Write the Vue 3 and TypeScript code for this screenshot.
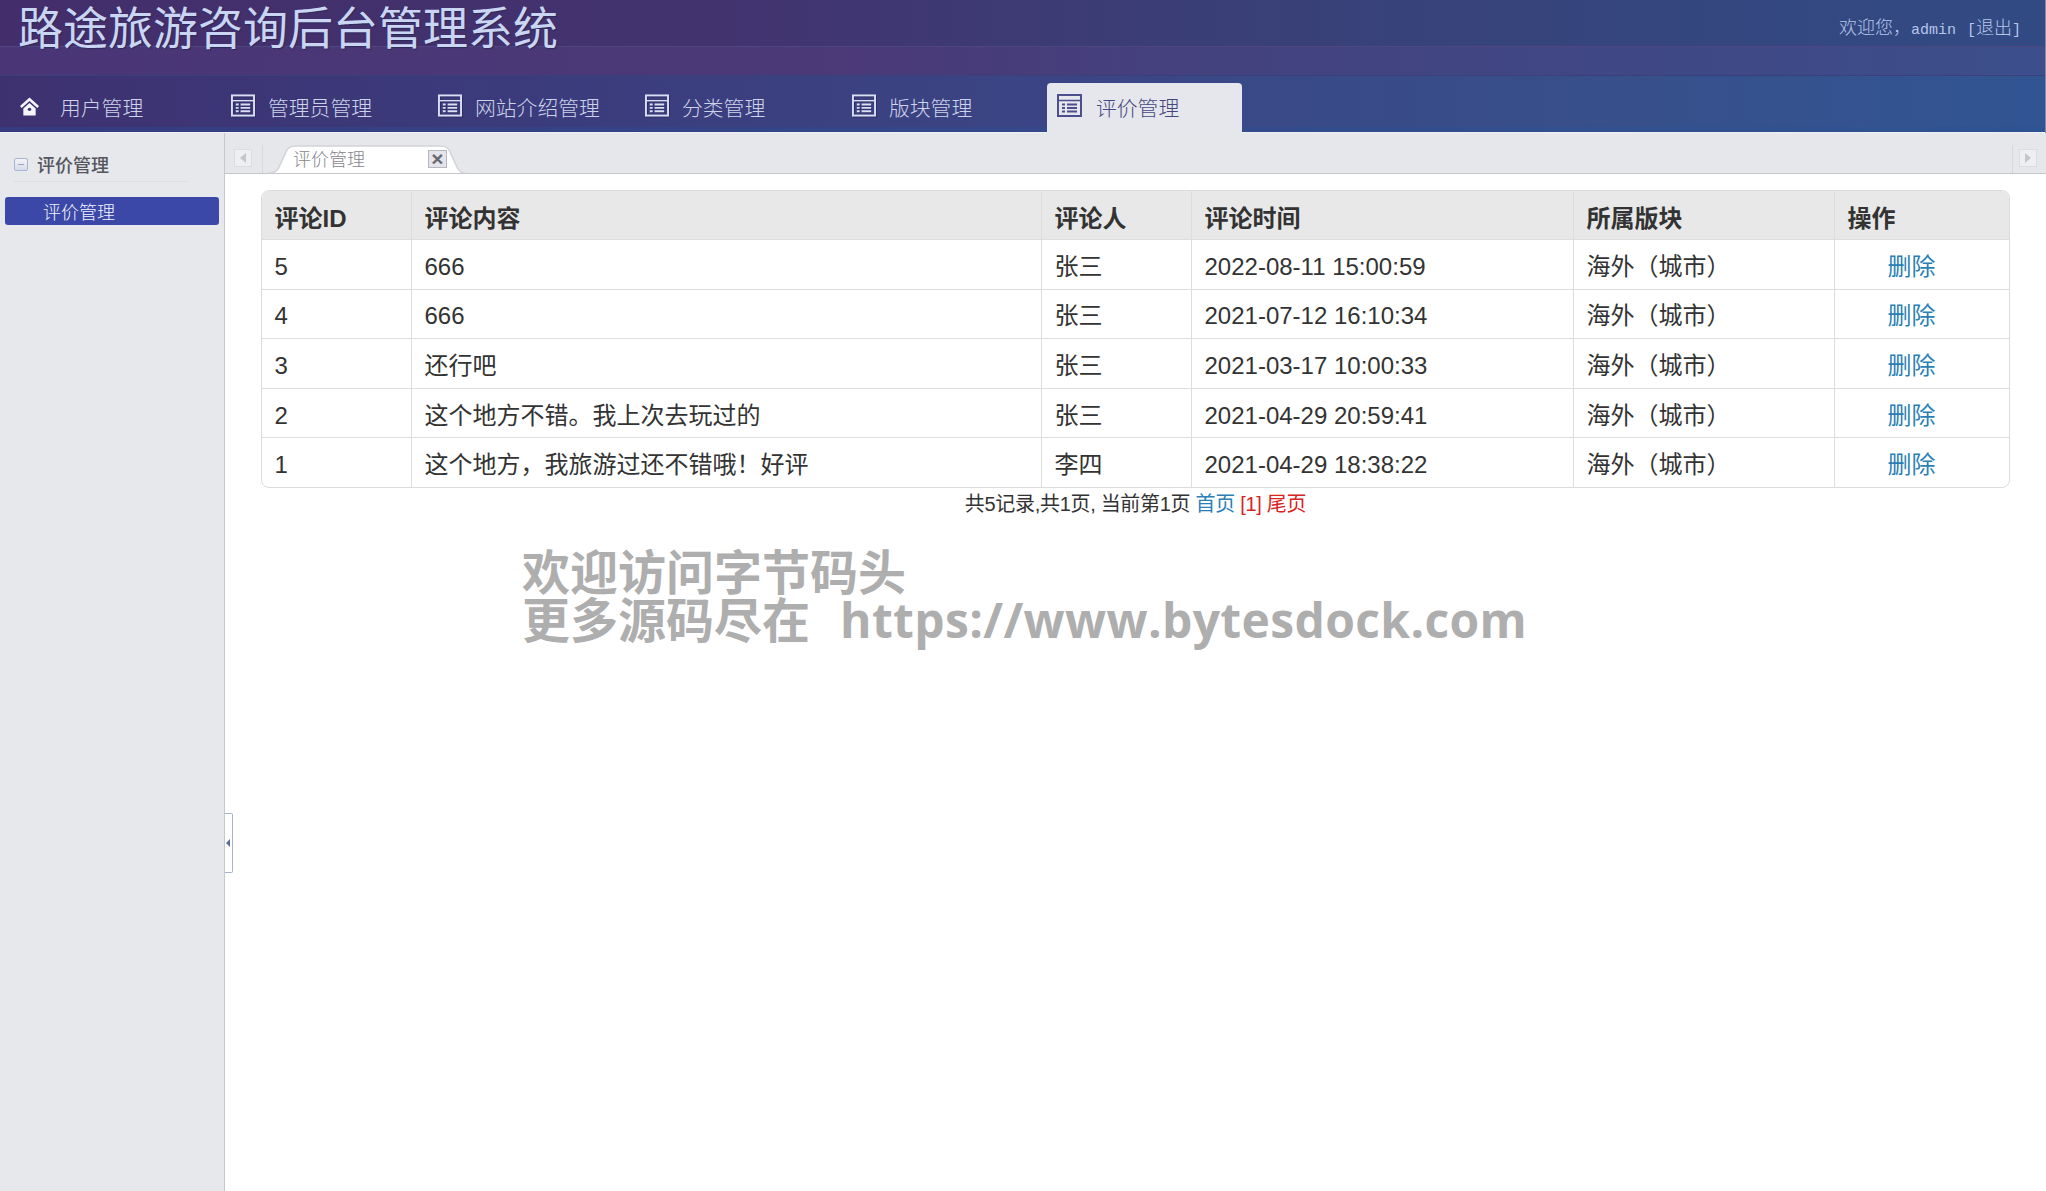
<script setup lang="ts">
// 评价管理页：顶部导航 + 左侧菜单 + 评论表格
interface Comment {
  id: number
  content: string
  user: string
  time: string
  board: string
}

const navItems = ['管理员管理', '网站介绍管理', '分类管理', '版块管理']

const comments: Comment[] = [
  { id: 5, content: '666', user: '张三', time: '2022-08-11 15:00:59', board: '海外（城市）' },
  { id: 4, content: '666', user: '张三', time: '2021-07-12 16:10:34', board: '海外（城市）' },
  { id: 3, content: '还行吧', user: '张三', time: '2021-03-17 10:00:33', board: '海外（城市）' },
  { id: 2, content: '这个地方不错。我上次去玩过的', user: '张三', time: '2021-04-29 20:59:41', board: '海外（城市）' },
  { id: 1, content: '这个地方，我旅游过还不错哦！好评', user: '李四', time: '2021-04-29 18:38:22', board: '海外（城市）' },
]
</script>

<template>
  <div class="page">
    <header class="header">
      <div class="top">
        <h1 class="title">路途旅游咨询后台管理系统</h1>
        <div class="welcome">欢迎您，<span class="mono">admin</span><span class="gap"></span><span class="mono">[</span>退出<span class="mono">]</span></div>
      </div>
      <div class="band"></div>
      <nav class="nav">
        <a class="nav-item home">
          <svg class="home-icon" viewBox="0 0 20 19" width="19" height="19">
            <path d="M10 0 20 9 18.2 11 10 3.8 1.8 11 0 9Z" fill="#f4f5fb" />
            <path d="M3.5 11.5 10 5.8l6.5 5.7V19h-13Z" fill="#f4f5fb" />
            <circle cx="10" cy="12.5" r="1.8" fill="#3c3570" />
          </svg>
          <span>用户管理</span>
        </a>
        <a v-for="item in navItems" :key="item" class="nav-item">
          <svg class="list-icon" viewBox="0 0 25 23" width="24" height="23">
            <rect x="1" y="1" width="23" height="21" fill="none" stroke="currentColor" stroke-width="2" />
            <path d="M1 6.5h23" stroke="currentColor" stroke-width="1.5" />
            <path d="M5 10.5h3M10 10.5h10M5 14h3M10 14h10M5 17.5h3M10 17.5h10" stroke="currentColor" stroke-width="2" />
          </svg>
          <span>{{ item }}</span>
        </a>
        <a class="nav-item active">
          <svg class="list-icon" viewBox="0 0 25 23" width="25" height="23">
            <rect x="1" y="1" width="23" height="21" fill="none" stroke="currentColor" stroke-width="2" />
            <path d="M1 6.5h23" stroke="currentColor" stroke-width="1.5" />
            <path d="M5 10.5h3M10 10.5h10M5 14h3M10 14h10M5 17.5h3M10 17.5h10" stroke="currentColor" stroke-width="2" />
          </svg>
          <span>评价管理</span>
        </a>
      </nav>
    </header>

    <div class="body">
      <aside class="side">
        <div class="side-title">
          <span class="side-toggle"></span>
          <span>评价管理</span>
        </div>
        <div class="side-active">评价管理</div>
      </aside>

      <main class="main">
        <div class="tabbar">
          <span class="scroll-btn">
            <i class="arrow left"></i>
          </span>
          <span class="sep"></span>
          <div class="tab">
            <svg class="tab-shape" viewBox="0 0 197 29" width="197" height="29">
              <path
                d="M0 28C8 28 10 25 12 20L18 7C20 2 23 1 28 1H172C177 1 180 2 182 7L188 20C190 25 192 28 197 28"
                fill="#fff"
                stroke="#d2d4d9"
                stroke-width="1.5"
              />
            </svg>
            <span class="tab-text">评价管理</span>
            <span class="tab-close">×</span>
          </div>
          <span class="sep push"></span>
          <span class="scroll-btn right-btn">
            <i class="arrow right"></i>
          </span>
        </div>

        <div class="content">
          <div class="table-wrap">
            <table class="table">
              <colgroup>
                <col style="width: 149px" />
                <col style="width: 630px" />
                <col style="width: 150px" />
                <col style="width: 382px" />
                <col style="width: 261px" />
                <col />
              </colgroup>
              <thead>
                <tr>
                  <th>评论ID</th>
                  <th>评论内容</th>
                  <th>评论人</th>
                  <th>评论时间</th>
                  <th>所属版块</th>
                  <th>操作</th>
                </tr>
              </thead>
              <tbody>
                <tr v-for="c in comments" :key="c.id">
                  <td>{{ c.id }}</td>
                  <td>{{ c.content }}</td>
                  <td>{{ c.user }}</td>
                  <td>{{ c.time }}</td>
                  <td>{{ c.board }}</td>
                  <td><a class="del">删除</a></td>
                </tr>
              </tbody>
            </table>
          </div>
          <div class="pager">
            共5记录,共1页, 当前第1页 <a class="first">首页</a> <span class="red">[1]</span> <span class="red">尾页</span>
          </div>
          <div class="watermark">
            <div>欢迎访问字节码头</div>
            <div>更多源码尽在<span class="wm-url">https://www.bytesdock.com</span></div>
          </div>
          <div class="collapse"><i></i></div>
        </div>
      </main>
    </div>
  </div>
</template>

<style>
html,
body {
  margin: 0;
  height: 100%;
  overflow: hidden;
}
</style>

<style scoped>
.page {
  height: 1191px;
  display: flex;
  flex-direction: column;
  font-family: "Liberation Sans", "Noto Sans CJK SC", sans-serif;
  color: #333;
  background: #fff;
}
.header {
  height: 133px;
  flex: none;
  display: flex;
  flex-direction: column;
  border-right: 1px solid #8a84a6;
}
.top {
  position: relative;
  z-index: 1;
  height: 46px;
  display: flex;
  justify-content: space-between;
  background: linear-gradient(90deg, #432e6b 0%, #42336f 35%, #3a3f77 60%, #34477f 85%, #324a84 100%);
}
.title {
  margin: 0 0 0 18px;
  font-size: 45px;
  line-height: 60px;
  height: 46px;
  font-weight: 400;
  color: #c9d5f2;
  text-shadow: 1px 1px 1px #2c2a58;
  white-space: nowrap;
}
.welcome {
  display: flex;
  align-items: baseline;
  height: 24px;
  margin: 14px 24px 0 0;
  font-size: 18px;
  line-height: 24px;
  font-weight: 300;
  color: #b6c6ea;
  font-family: "Noto Sans CJK SC", sans-serif;
}
.mono {
  font-family: "Liberation Mono", monospace;
  font-size: 15px;
  font-weight: 400;
}
.gap {
  width: 11px;
}
.band {
  height: 30px;
  background: linear-gradient(90deg, #4a3676 0%, #4b3877 40%, #43427f 60%, #3e4986 85%, #3c4f8c 100%);
  border-top: 1px solid #4f4580;
  border-bottom: 1px solid #39407a;
  box-sizing: border-box;
}
.nav {
  height: 57px;
  display: flex;
  align-items: flex-end;
  gap: 12px;
  padding-left: 12px;
  background: linear-gradient(90deg, #3e3170 0%, #3b3b7c 25%, #3b4484 50%, #37508c 80%, #315592 100%);
  border-bottom: 1px solid #f0f1f5;
  box-shadow: inset 0 -5px 0 rgba(40, 80, 150, 0.35);
  box-sizing: border-box;
}
.nav-item {
  width: 195px;
  height: 49px;
  flex: none;
  display: flex;
  align-items: center;
  padding-left: 12px;
  box-sizing: border-box;
  font-size: 20.8px;
  font-weight: 300;
  color: #cdd4ea;
}
.nav-item span {
  margin-left: 13px;
  position: relative;
  top: -1px;
}
.list-icon {
  color: #d9dff2;
  position: relative;
  top: -2px;
  flex: none;
  filter: drop-shadow(1px 1px 0 #2f2c66);
}
.home {
  padding-left: 8px;
}
.home span {
  margin-left: 21px;
}
.home-icon {
  flex: none;
  position: relative;
  top: -1px;
}
.nav .active {
  background: #e6e7ec;
  color: #45487f;
  border-radius: 4px 4px 0 0;
  height: 50px;
  margin-bottom: -1px;
  padding-left: 10px;
}
.active span {
  margin-left: 14px;
}
.active .list-icon {
  color: #4b4f8e;
  top: -3px;
  filter: none;
}
.body {
  flex: 1;
  min-height: 0;
  display: flex;
}
.side {
  width: 225px;
  flex: none;
  background: #e6e8ec;
  border-right: 1px solid #c6c8cd;
  box-sizing: border-box;
  padding: 18px 5px 0;
}
.side-title {
  display: flex;
  align-items: center;
  gap: 9px;
  margin: 0 30px 15px 9px;
  padding-bottom: 4px;
  height: 26px;
  border-bottom: 1px solid #dcdee3;
  font-size: 18px;
  font-weight: 500;
  color: #55565c;
  font-family: "Noto Sans CJK SC", sans-serif;
}
.side-toggle {
  position: relative;
  width: 14px;
  height: 13px;
  border: 1px solid #a9b6d3;
  border-radius: 2px;
  background: linear-gradient(#f3f4f8, #d6dbe8);
  box-sizing: border-box;
  flex: none;
}
.side-toggle::after {
  content: "";
  position: absolute;
  left: 3px;
  top: 5px;
  width: 6px;
  height: 1px;
  background: #9aa6c2;
}
.side-active {
  height: 28px;
  line-height: 28px;
  width: 214px;
  padding-left: 38px;
  box-sizing: border-box;
  background: #3c48a8;
  border-radius: 3px;
  color: #f2f4fb;
  font-size: 18px;
  font-family: "Noto Sans CJK SC", sans-serif;
  font-weight: 300;
}
.main {
  flex: 1;
  min-width: 0;
  display: flex;
  flex-direction: column;
}
.tabbar {
  height: 41px;
  flex: none;
  display: flex;
  align-items: flex-end;
  background: #e6e7eb;
  border-bottom: 1px solid #c4c6cb;
  box-sizing: border-box;
  padding-left: 9px;
  padding-right: 9px;
}
.scroll-btn {
  width: 18px;
  height: 18px;
  margin-bottom: 6px;
  background: #eeeff2;
  border: 1px solid #dcdde1;
  box-sizing: border-box;
  display: flex;
  align-items: center;
  justify-content: center;
  flex: none;
}
.sep {
  width: 1px;
  height: 28px;
  margin-left: 10px;
  background: #d8d9dd;
  flex: none;
}
.push {
  margin-left: auto;
  margin-right: 6px;
}
.arrow {
  width: 0;
  height: 0;
  border-top: 5px solid transparent;
  border-bottom: 5px solid transparent;
}
.arrow.left {
  border-right: 6px solid #c4c6ca;
}
.arrow.right {
  border-left: 6px solid #c4c6ca;
}
.tab {
  position: relative;
  width: 197px;
  height: 29px;
  margin: 0 0 -1px 5px;
  box-sizing: border-box;
  display: flex;
  align-items: center;
  justify-content: space-between;
  padding: 0 18px 0 25px;
  flex: none;
}
.tab-shape {
  position: absolute;
  left: 0;
  top: 0;
}
.tab-text {
  position: relative;
  top: -2px;
  font-size: 18px;
  color: #85868c;
  font-family: "Noto Sans CJK SC", sans-serif;
  font-weight: 300;
}
.tab-close {
  position: relative;
  top: -1px;
  width: 19px;
  height: 18px;
  line-height: 15px;
  text-align: center;
  background: #e4e5ea;
  border: 1px solid #b5b7bd;
  box-sizing: border-box;
  font-size: 21px;
  font-weight: 700;
  color: #666a73;
}
.content {
  flex: 1;
  position: relative;
  padding: 16px 36px 0 36px;
  background: #fff;
}
.table-wrap {
  border: 1px solid #dcdcdc;
  border-radius: 8px;
  overflow: hidden;
}
.table {
  width: 100%;
  table-layout: fixed;
  border-collapse: separate;
  border-spacing: 0;
  font-size: 24px;
}
.table th {
  height: 46px;
  background: #e8e8e8;
  text-align: left;
  font-weight: 700;
  padding: 2px 12.5px 0;
  color: #333;
  border-left: 1px solid #dddddd;
  border-bottom: 1px solid #dddddd;
}
.table td {
  height: 43.6px;
  padding: 5px 12.5px 0;
  line-height: 24px;
  color: #333;
  border-left: 1px solid #dddddd;
  border-bottom: 1px solid #dddddd;
  white-space: nowrap;
}
.table th:first-child,
.table td:first-child {
  border-left: none;
}
.table tr:last-child td {
  border-bottom: none;
}
.del {
  color: #2a7fb5;
  margin-left: 40px;
}
.pager {
  text-align: center;
  font-size: 20px;
  line-height: 28px;
  margin-top: 2px;
  letter-spacing: -0.3px;
}
.first {
  color: #2a7fb5;
}
.red {
  color: #d8231f;
}
.watermark {
  position: absolute;
  left: 297px;
  top: 374px;
  font-family: "Open Sans", "Noto Sans CJK SC", sans-serif;
  font-size: 48px;
  line-height: 48px;
  font-weight: 700;
  color: #aeaeae;
  white-space: nowrap;
  pointer-events: none;
}
.wm-url {
  margin-left: 30px;
  letter-spacing: 0.35px;
}
.collapse {
  position: absolute;
  left: 0;
  top: 639px;
  width: 8px;
  height: 60px;
  background: #fff;
  border: 1px solid #a9b3cf;
  border-left: none;
  border-radius: 0 2px 2px 0;
  box-sizing: border-box;
  display: flex;
  align-items: center;
}
.collapse i {
  width: 0;
  height: 0;
  margin-left: 1px;
  border-top: 4px solid transparent;
  border-bottom: 4px solid transparent;
  border-right: 4px solid #5a6a9e;
}
</style>
